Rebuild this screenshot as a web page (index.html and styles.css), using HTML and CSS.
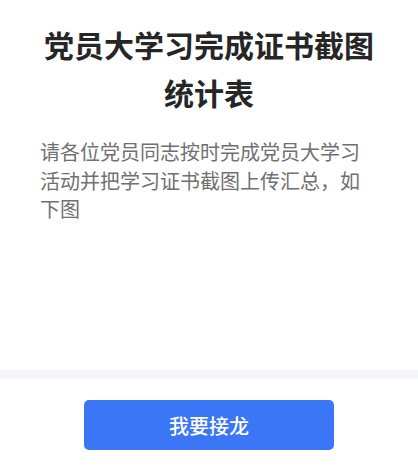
FILE: index.html
```html
<!DOCTYPE html>
<html>
<head>
  <meta charset="UTF-8">
  <title>党员大学习完成证书截图统计表</title>
  <link rel="stylesheet" href="styles.css">
</head>
<body>

<div class="content">
  <h1 class="title">党员大学习完成证书截图统计表</h1>
  <p class="desc">请各位党员同志按时完成党员大学习活动并把学习证书截图上传汇总，如下图</p>
</div>

<div class="divider"></div>

<div class="footer">
  <button class="join-btn">我要接龙</button>
</div>

</body>
</html>
```

FILE: styles.css
```css
body {
  margin: 0;
  background: #fff;
  font-family: "Noto Sans CJK SC", "Liberation Sans", sans-serif;
}
.content {
  height: 370px;
  padding: 20px 40px 0;
  box-sizing: border-box;
}
.title {
  margin: 0;
  font-size: 30px;
  line-height: 48px;
  font-weight: bold;
  color: #262626;
  text-align: center;
}
.desc {
  margin: 22px 0 0;
  font-size: 20px;
  line-height: 28.5px;
  font-weight: normal;
  color: #707070;
}
.divider {
  height: 9px;
  background: #f5f6fa;
}
.footer {
  display: flex;
  justify-content: center;
  padding-top: 21px;
}
.join-btn {
  width: 250px;
  height: 50px;
  border: none;
  border-radius: 5px;
  background: #3b76f6;
  color: #fff;
  font-family: "Noto Sans CJK SC", sans-serif;
  font-size: 20px;
  font-weight: 500;
}
```
